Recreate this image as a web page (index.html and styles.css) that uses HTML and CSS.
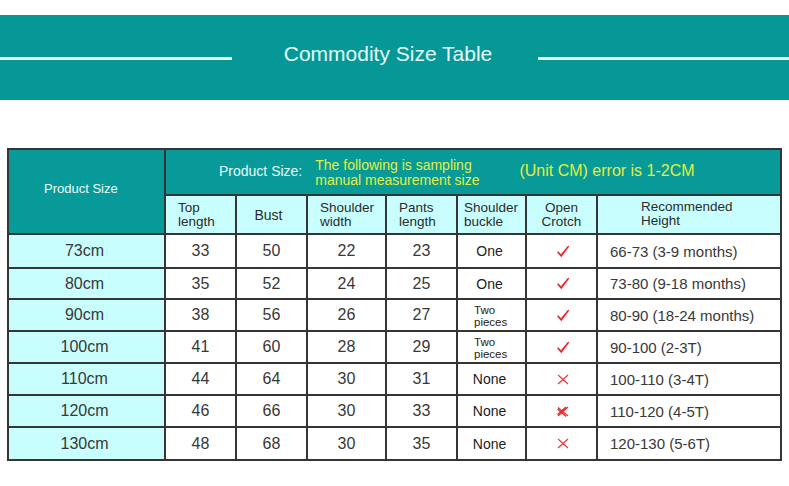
FILE: index.html
```
<!DOCTYPE html>
<html lang="en">
<head>
<meta charset="utf-8">
<title>Commodity Size Table</title>
<link rel="stylesheet" href="styles.css">
</head>
<body>
<header class="banner">
  <span class="rule rule-left"></span>
  <h1 class="title">Commodity Size Table</h1>
  <span class="rule rule-right"></span>
</header>

<table class="sizes">
  <colgroup>
    <col class="c-size"><col class="c-top"><col class="c-bust"><col class="c-shoulder"><col class="c-pants"><col class="c-buckle"><col class="c-crotch"><col class="c-height">
  </colgroup>
  <thead>
    <tr class="h1">
      <th rowspan="2" class="ps">Product Size</th>
      <th colspan="7" class="info">
        <div class="info-row">
          <span class="info-label">Product Size:</span>
          <span class="info-note">The following is sampling<br>manual measurement size</span>
          <span class="info-unit">(Unit CM) error is 1-2CM</span>
        </div>
      </th>
    </tr>
    <tr class="h2">
      <th class="left">Top<br>length</th>
      <th class="bust">Bust</th>
      <th class="left">Shoulder<br>width</th>
      <th class="left">Pants<br>length</th>
      <th class="left tight">Shoulder<br>buckle</th>
      <th>Open<br>Crotch</th>
      <th class="rec">Recommended<br>Height</th>
    </tr>
  </thead>
  <tbody>
    <tr class="r34">
      <td class="size">73cm</td><td>33</td><td>50</td><td>22</td><td>23</td><td class="word">One</td>
      <td><svg class="mark" viewBox="0 0 14 13"><path d="M1 7.2 L2.3 6.2 L5 9.2 L12.1 0.6 L13.2 1.4 L5.3 12.2 Z" fill="#ea2530"/></svg></td>
      <td class="h">66-73 (3-9 months)</td>
    </tr>
    <tr class="r31">
      <td class="size">80cm</td><td>35</td><td>52</td><td>24</td><td>25</td><td class="word">One</td>
      <td><svg class="mark" viewBox="0 0 14 13"><path d="M1 7.2 L2.3 6.2 L5 9.2 L12.1 0.6 L13.2 1.4 L5.3 12.2 Z" fill="#ea2530"/></svg></td>
      <td class="h">73-80 (9-18 months)</td>
    </tr>
    <tr class="r32">
      <td class="size">90cm</td><td>38</td><td>56</td><td>26</td><td>27</td><td class="pieces">Two<br>pieces</td>
      <td><svg class="mark" viewBox="0 0 14 13"><path d="M1 7.2 L2.3 6.2 L5 9.2 L12.1 0.6 L13.2 1.4 L5.3 12.2 Z" fill="#ea2530"/></svg></td>
      <td class="h">80-90 (18-24 months)</td>
    </tr>
    <tr class="r32">
      <td class="size">100cm</td><td>41</td><td>60</td><td>28</td><td>29</td><td class="pieces">Two<br>pieces</td>
      <td><svg class="mark" viewBox="0 0 14 13"><path d="M1 7.2 L2.3 6.2 L5 9.2 L12.1 0.6 L13.2 1.4 L5.3 12.2 Z" fill="#ea2530"/></svg></td>
      <td class="h">90-100 (2-3T)</td>
    </tr>
    <tr class="r32">
      <td class="size">110cm</td><td>44</td><td>64</td><td>30</td><td>31</td><td class="word">None</td>
      <td><svg class="cross" viewBox="0 0 12 11"><path d="M1 1 L11 10 M11 1 L1 10" stroke="#ee3b3b" stroke-width="1.3" fill="none"/></svg></td>
      <td class="h">100-110 (3-4T)</td>
    </tr>
    <tr class="r32">
      <td class="size">120cm</td><td>46</td><td>66</td><td>30</td><td>33</td><td class="word">None</td>
      <td><svg class="cross" viewBox="0 0 12 11"><path d="M1 1.5 L11 10 M11 1 L1 10 M0.5 3 L9 10.5 M9 1 L0.5 8.5" stroke="#e62a2a" stroke-width="1.2" fill="none"/></svg></td>
      <td class="h">110-120 (4-5T)</td>
    </tr>
    <tr class="r33">
      <td class="size">130cm</td><td>48</td><td>68</td><td>30</td><td>35</td><td class="word">None</td>
      <td><svg class="cross" viewBox="0 0 12 11"><path d="M1 1 L11 10 M11 1 L1 10" stroke="#ee3b3b" stroke-width="1.3" fill="none"/></svg></td>
      <td class="h">120-130 (5-6T)</td>
    </tr>
  </tbody>
</table>
</body>
</html>
```

FILE: styles.css
```
html, body {
  margin: 0;
  padding: 0;
  background: #ffffff;
}

body {
  font-family: "Liberation Sans", Arial, sans-serif;
  width: 789px;
}

.banner {
  margin-top: 15px;
  height: 85px;
  background: #069897;
  display: flex;
  align-items: center;
}

.rule {
  display: block;
  height: 3px;
  background: #e6fbfb;
  margin-top: 2px;
}

.rule-left {
  width: 232px;
}

.rule-right {
  width: 251px;
}

.title {
  flex: 1;
  margin: 0;
  padding-left: 6px;
  text-align: center;
  font-weight: normal;
  font-size: 21px;
  color: #e4fbfb;
  margin-top: -8px;
}

.sizes {
  margin: 48px 0 0 7px;
  width: 773px;
  table-layout: fixed;
  border-collapse: collapse;
  color: #333333;
}

.c-size { width: 157px; }
.c-top { width: 71px; }
.c-bust { width: 71px; }
.c-shoulder { width: 79px; }
.c-pants { width: 71px; }
.c-buckle { width: 69px; }
.c-crotch { width: 71px; }
.c-height { width: 184px; }

.sizes th,
.sizes td {
  border: 2px solid #353535;
  padding: 0;
  vertical-align: middle;
}

.h1 { height: 46px; }
.h2 { height: 39px; }
.r34 { height: 34px; }
.r31 { height: 31px; }
.r32 { height: 32px; }
.r33 { height: 33px; }

.sizes th.ps {
  background: #079a98;
  color: #eefcfc;
  font-weight: normal;
  font-size: 13px;
  text-align: left;
  padding: 0 0 6px 35px;
}

.info {
  background: #079a98;
  font-weight: normal;
  text-align: left;
}

.info-row {
  display: flex;
  align-items: center;
  padding-left: 53px;
}

.info-label {
  color: #e6fbfb;
  font-size: 14px;
  margin-top: -2px;
}

.info-note {
  color: #e3ee42;
  font-size: 14px;
  line-height: 15px;
  margin-left: 13px;
  margin-top: 2px;
}

.info-unit {
  color: #e3ee42;
  font-size: 16px;
  margin-left: 40px;
  margin-top: -2px;
}

.h2 th {
  background: #c9fefe;
  font-weight: normal;
  font-size: 13.5px;
  line-height: 14px;
  color: #2b2b2b;
  text-align: center;
}

.h2 th.left {
  text-align: left;
  padding-left: 12px;
}

.h2 th.tight {
  padding-left: 6px;
}

.h2 th.bust {
  padding-right: 6px;
  font-size: 14px;
}

.h2 th.rec {
  text-align: left;
  padding-left: 43px;
  vertical-align: top;
  padding-top: 4px;
}

.sizes td {
  text-align: center;
  font-size: 16px;
  color: #383838;
}

.sizes td.size {
  background: #c9fefe;
  font-size: 16px;
  padding-right: 4px;
}

.sizes td.word {
  font-size: 14px;
  color: #222222;
  padding-right: 4px;
}

.sizes td.pieces {
  font-size: 11.5px;
  line-height: 12px;
  color: #222222;
  text-align: left;
  padding-left: 16px;
  padding-top: 1px;
}

.sizes td.h {
  text-align: left;
  padding-left: 12px;
  font-size: 15px;
}

.mark {
  display: block;
  width: 14px;
  height: 13px;
  margin: 0 auto;
  position: relative;
  left: 1px;
}

.cross {
  display: block;
  width: 12px;
  height: 11px;
  margin: 0 auto;
  position: relative;
  left: 1px;
}
```
